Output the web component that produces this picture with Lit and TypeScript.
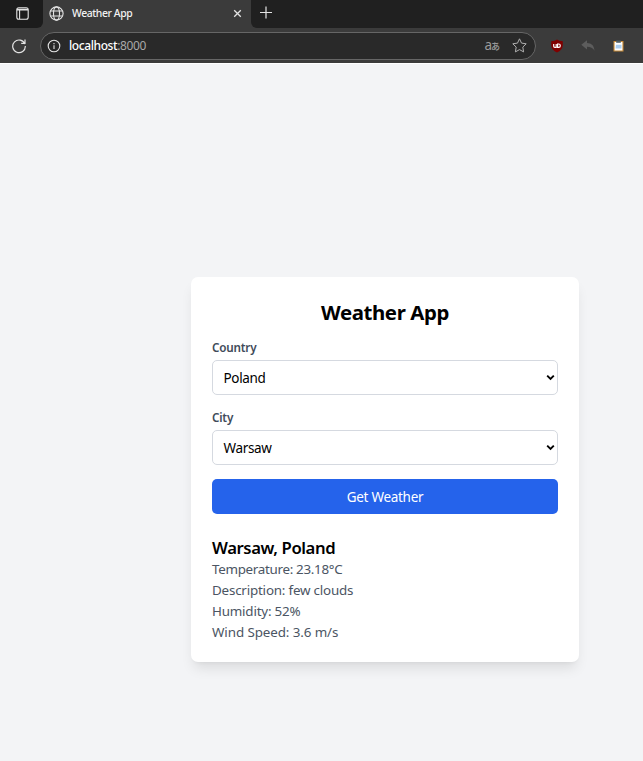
import { LitElement, html, css } from "lit";
import { customElement, property } from "lit/decorators.js";

const FONT = css`"Noto Sans", "Open Sans", sans-serif`;

@customElement("browser-chrome")
class BrowserChrome extends LitElement {
  static styles = css`
    :host { display: block; font-family: ${FONT}; color: #f2f2f2; }
    svg { display: block; flex: none; fill: none; stroke: #e4e4e4; }
    .tabs { display: flex; height: 28px; background: #202020; }
    .workspace { width: 43px; box-sizing: border-box; height: 28px; padding: 7px 0 0 16px; background: #1c1c1c; border-bottom-right-radius: 6px; }
    .under { display: flex; background: #3b3b3b; }
    .tab { width: 208px; box-sizing: border-box; display: flex; align-items: center; height: 28px; padding: 0 8px 2px 6px; background: #3b3b3b; }
    .title { flex: 1; margin-left: 8px; font-size: 10.4px; font-weight: 500; line-height: 14px; white-space: nowrap; letter-spacing: -0.4px; }
    .right { flex: 1; background: #3b3b3b; }
    .rest { height: 28px; box-sizing: border-box; padding: 6px 0 0 8px; background: #202020; border-bottom-left-radius: 6px; }
    .bar { display: flex; align-items: center; height: 35px; box-sizing: border-box; padding: 0 18px 0 11px; background: #3b3b3b; }
    .address { display: flex; align-items: center; width: 496px; height: 28px; box-sizing: border-box; margin-left: 13px; padding: 0 8px 0 6px; border: 1px solid #666; border-radius: 14px; background: #292929; }
    .url { flex: 1; margin-left: 8px; font-size: 12px; font-weight: 500; line-height: 16px; letter-spacing: -0.4px; color: #fff; }
    .port { font-weight: 400; color: #a8a8a8; }
    .lang { display: flex; align-items: baseline; margin-right: 12px; font-size: 13.5px; line-height: 14px; color: #9b9b9b; }
    .kana { font-family: "Noto Sans CJK JP", sans-serif; font-size: 9px; font-weight: 500; line-height: 12px; margin-left: -1px; }
    .shield { margin-left: 15px; }
    .reply { margin-left: 18px; }
    .clip { margin-left: 18px; }
    .line { height: 1px; background: #fff; }
  `;

  render() {
    return html`
      <div class="tabs">
        <div class="under">
          <div class="workspace">
            <svg width="13" height="13" viewBox="0 0 13 13" stroke-width="1.1">
              <rect x=".8" y=".8" width="11.4" height="11.4" rx="2"></rect>
              <path d="M1 2.6H12" stroke-width="1.8"></path>
              <path d="M3.6 3V12"></path>
            </svg>
          </div>
        </div>
        <div class="right">
          <div class="under">
            <div class="tab">
              <svg width="15" height="15" viewBox="0 0 15 15" stroke-width="1.1">
                <circle cx="7.5" cy="7.5" r="6.6"></circle>
                <ellipse cx="7.5" cy="7.5" rx="3" ry="6.6"></ellipse>
                <path d="M1.6 5H13.4M1.6 10H13.4"></path>
              </svg>
              <span class="title">Weather App</span>
              <svg width="11" height="11" viewBox="0 0 11 11" stroke-width="1.3"><path d="M2.2 2.2L8.8 8.8M8.8 2.2L2.2 8.8"></path></svg>
            </div>
            <div class="right rest">
              <svg width="14" height="13" viewBox="0 0 14 13"><path d="M7 .5V12.5M1 6.5H13" stroke-width="1.2"></path></svg>
            </div>
          </div>
        </div>
      </div>
      <div class="bar">
        <svg width="16" height="16" viewBox="0 0 16 16" stroke-width="1.2">
          <path d="M13.9 6.1A6.3 6.3 0 1 0 14.3 8M14 1.6V5.4H10.2"></path>
        </svg>
        <div class="address">
          <svg width="14" height="14" viewBox="0 0 14 14" stroke-width="1.1">
            <circle cx="7" cy="7" r="5.8"></circle>
            <path d="M7 6.3V10M7 4V5.2"></path>
          </svg>
          <span class="url">localhost<span class="port">:8000</span></span>
          <span class="lang">a<span class="kana">あ</span></span>
          <svg width="15" height="15" viewBox="0 0 15 15" stroke-width="1">
            <path stroke="#b0b0b0" stroke-linejoin="round" d="M7.5 .8L9.5 5.1L14.2 5.8L10.8 9.1L11.6 13.9L7.5 11.6L3.4 13.9L4.2 9.1L.8 5.8L5.5 5.1Z"></path>
          </svg>
        </div>
        <svg class="shield" width="12" height="14" viewBox="0 0 12 14">
          <path stroke="none" fill="#800000" d="M6 .4Q8 2 11.8 2.2V6.5Q11.4 11 6 13.6Q.6 11 .2 6.5V2.2Q4 2 6 .4Z"></path>
          <path stroke="#fff" stroke-width="1.2" d="M2.7 5V7.3Q2.7 8.3 3.8 8.3H5.2V5M6.6 5V8.3H7.7Q9.3 8.3 9.3 6.65Q9.3 5 7.7 5Z"></path>
        </svg>
        <svg class="reply" width="14" height="12" viewBox="0 0 14 12">
          <path stroke="none" fill="#5d5d5d" d="M.3 4.8L6 .3V3Q13 3.2 13.6 10.7Q11.3 6.8 6 6.8V9.4Z"></path>
        </svg>
        <svg class="clip" width="11" height="12" viewBox="0 0 11 12">
          <path stroke="none" fill="#c98c39" d="M.5 1H10.5V11.5H.5Z"></path>
          <path stroke="none" fill="#fff" d="M1.6 2H9.4V10.5H1.6Z"></path>
          <path stroke="none" fill="#a9cdf0" d="M3 4.8H8.5V8.5H2.5Z"></path>
          <path stroke="none" fill="#516068" d="M3.2 .5H7.8V2.8H3.2Z"></path>
        </svg>
      </div>
      <div class="line"></div>
    `;
  }
}

@customElement("select-field")
class SelectField extends LitElement {
  @property() label = "";
  @property() value = "";

  static styles = css`
    :host { display: block; font-family: ${FONT}; }
    .label { font-size: 11.7px; font-weight: 600; line-height: 18px; color: #414b5a; letter-spacing: -0.2px; }
    .box { display: flex; align-items: center; justify-content: space-between; height: 35px; margin-top: 4px; box-sizing: border-box; padding: 1px 2px 0 10.5px; border: 1px solid #d5d9e0; border-radius: 5px; background: #fff; }
    .value { font-size: 13.5px; line-height: 20px; color: #000; letter-spacing: -0.35px; }
    svg { display: block; margin-top: -2px; }
  `;

  render() {
    return html`
      <div class="label">${this.label}</div>
      <div class="box">
        <span class="value">${this.value}</span>
        <svg width="9" height="7" viewBox="0 0 9 7"><path d="M1.2 1.6L4.5 4.9L7.8 1.6" fill="none" stroke="#000" stroke-width="1.9"></path></svg>
      </div>
    `;
  }
}

@customElement("app-root")
class AppRoot extends LitElement {
  static styles = css`
    :host { display: block; height: 761px; overflow: hidden; background: #f3f4f6; font-family: ${FONT}; }
    .page { padding: 213px 64px 0 191px; }
    .card { height: 385px; box-sizing: border-box; padding: 21px; border-radius: 7px; background: #fff; box-shadow: 0 9px 13px -3px rgba(0,0,0,.1), 0 3px 5px -4px rgba(0,0,0,.1); }
    .heading { margin: 0; text-align: center; font-size: 20.4px; font-weight: 700; line-height: 29px; color: #000; letter-spacing: -0.4px; }
    .fields { display: flex; flex-direction: column; gap: 13px; margin-top: 11px; }
    .button { display: flex; align-items: center; justify-content: center; height: 35px; margin-top: 1px; border-radius: 5px; background: #2563eb; color: #fff; font-size: 13.5px; letter-spacing: -0.28px; }
    .place { margin: 22px 0 0; font-size: 16.7px; font-weight: 600; line-height: 23.4px; color: #000; letter-spacing: -0.4px; }
    .fact { font-size: 13.4px; line-height: 20.8px; color: #4b5563; letter-spacing: -0.2px; }
    .fact.tight { letter-spacing: -0.31px; }
    .fact.loose { letter-spacing: -0.1px; }
  `;

  render() {
    const facts = [
      ["Temperature: 23.18°C", "fact tight"],
      ["Description: few clouds", "fact"],
      ["Humidity: 52%", "fact"],
      ["Wind Speed: 3.6 m/s", "fact loose"],
    ];
    return html`
      <browser-chrome></browser-chrome>
      <div class="page">
        <div class="card">
          <h1 class="heading">Weather App</h1>
          <div class="fields">
            <select-field label="Country" value="Poland"></select-field>
            <select-field label="City" value="Warsaw"></select-field>
            <div class="button">Get Weather</div>
          </div>
          <h2 class="place">Warsaw, Poland</h2>
          ${facts.map(([text, cls]) => html`<div class=${cls}>${text}</div>`)}
        </div>
      </div>
    `;
  }
}
